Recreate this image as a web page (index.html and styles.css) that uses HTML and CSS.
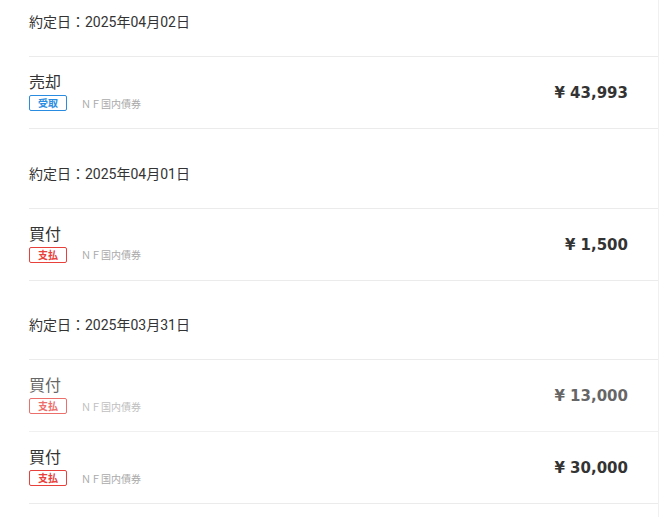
FILE: index.html
```html
<!DOCTYPE html>
<html lang="ja">
<head>
  <meta charset="UTF-8" />
  <meta name="viewport" content="width=device-width, initial-scale=1" />
  <title>取引履歴</title>
  <link rel="stylesheet" href="styles.css">
</head>
<body>

  <main id="history">

    <!-- 2025/04/02 -->
    <section class="day-group">
      <div class="day-header">約定日：2025年04月02日</div>
      <div class="trade-row">
        <div class="trade-info">
          <div class="trade-title">売却</div>
          <div class="trade-meta">
            <span class="badge badge-in">受取</span>
            <span class="fund-name">ＮＦ国内債券</span>
          </div>
        </div>
        <div class="trade-amount">¥ 43,993</div>
      </div>
    </section>

    <!-- 2025/04/01 -->
    <section class="day-group">
      <div class="day-header">約定日：2025年04月01日</div>
      <div class="trade-row">
        <div class="trade-info">
          <div class="trade-title">買付</div>
          <div class="trade-meta">
            <span class="badge badge-out">支払</span>
            <span class="fund-name">ＮＦ国内債券</span>
          </div>
        </div>
        <div class="trade-amount">¥ 1,500</div>
      </div>
    </section>

    <!-- 2025/03/31 -->
    <section class="day-group">
      <div class="day-header">約定日：2025年03月31日</div>
      <div class="trade-row pending">
        <div class="trade-info">
          <div class="trade-title">買付</div>
          <div class="trade-meta">
            <span class="badge badge-out">支払</span>
            <span class="fund-name">ＮＦ国内債券</span>
          </div>
        </div>
        <div class="trade-amount">¥ 13,000</div>
      </div>
      <div class="trade-row">
        <div class="trade-info">
          <div class="trade-title">買付</div>
          <div class="trade-meta">
            <span class="badge badge-out">支払</span>
            <span class="fund-name">ＮＦ国内債券</span>
          </div>
        </div>
        <div class="trade-amount">¥ 30,000</div>
      </div>
    </section>

  </main>

</body>
</html>
```

FILE: styles.css
```css
body {
  margin: 0;
  font-family: 'Noto Sans CJK JP', 'Noto Sans', sans-serif;
  background-color: #fff;
  color: #333;
}

/* List */
#history {
  width: 659px;
  border-right: 1px solid #f0f0f0;
  min-height: 100vh;
  padding-left: 29px;
  box-sizing: border-box;
}

.day-group + .day-group {
  margin-top: 22.5px;
}

.day-header {
  padding: 12px 0 24px;
  font-family: Roboto, 'Noto Sans CJK JP', sans-serif;
  font-size: 14px;
  line-height: 20px;
  color: #333;
  border-bottom: 1px solid #ebebeb;
}

/* Trade row */
.trade-row {
  display: flex;
  justify-content: space-between;
  align-items: center;
  padding: 14px 30px 17px 0;
  border-bottom: 1px solid #ebebeb;
}

.trade-row.pending {
  opacity: 0.75;
}

.trade-title {
  font-size: 16px;
  line-height: 20px;
}

.trade-meta {
  display: flex;
  align-items: center;
  gap: 14px;
  margin-top: 4px;
}

.badge {
  box-sizing: border-box;
  width: 38px;
  height: 16px;
  line-height: 14px;
  border: 1px solid;
  border-radius: 2px;
  font-size: 10px;
  font-weight: bold;
  text-align: center;
}

.badge-in {
  color: #2a8ce0;
  border-color: #2a8ce0;
}

.badge-out {
  color: #e8403a;
  border-color: #e8403a;
}

.fund-name {
  font-size: 10px;
  color: #aaa;
}

.trade-amount {
  font-family: 'DejaVu Sans', 'Noto Sans CJK JP', sans-serif;
  font-size: 15px;
  font-weight: bold;
  color: #333;
  margin-top: 4px;
}
```
